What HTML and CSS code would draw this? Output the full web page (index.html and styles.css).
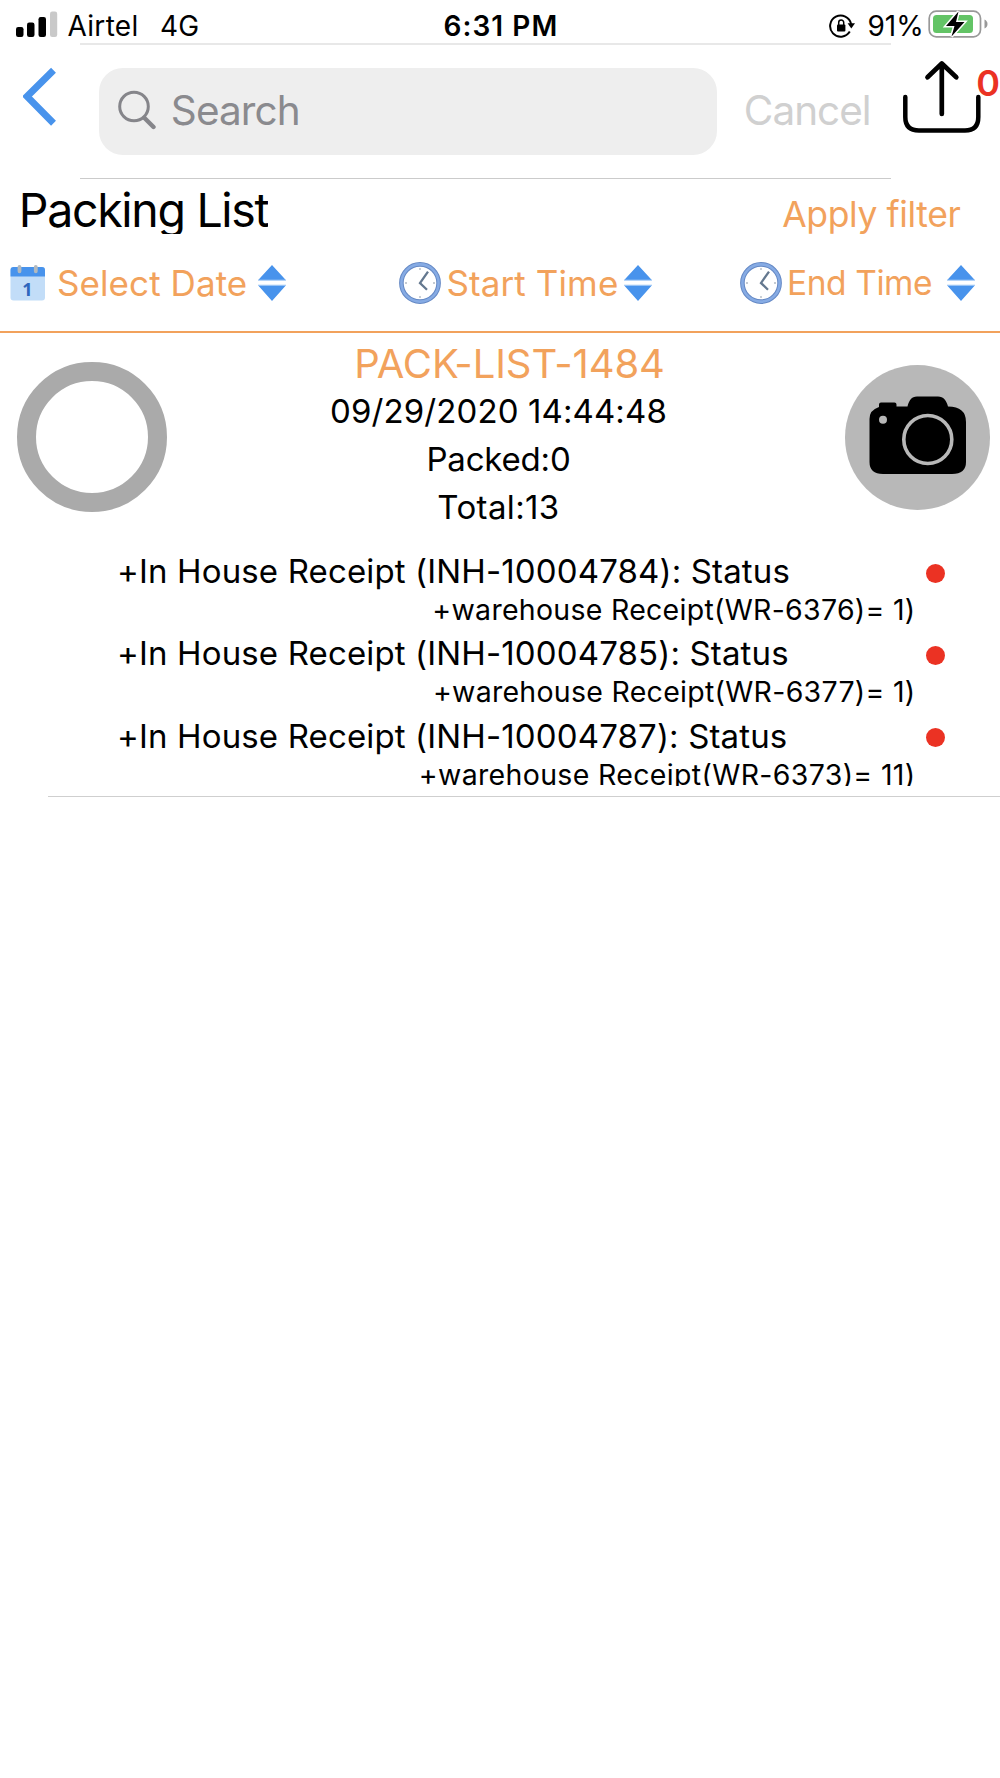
FILE: index.html
```html
<!DOCTYPE html>
<html lang="en">
<head>
<meta charset="utf-8">
<title>Packing List</title>
<link rel="stylesheet" href="styles.css">
</head>
<body>
<svg width="0" height="0" class="defs" aria-hidden="true">
  <symbol id="sort" viewBox="0 0 30 38">
    <path d="M15 1 29 16.2H1zM15 37 29 21.2H1z" fill="#4893ec"/>
    <path d="M1 16.2h28M1 21.2h28" stroke="#a9cdf6" stroke-width="1"/>
  </symbol>
  <symbol id="clock" viewBox="0 0 44 44">
    <circle cx="22" cy="22" r="18.6" fill="#fff" stroke="#6488c4" stroke-width="4.6"/>
    <circle cx="22" cy="22" r="18.6" fill="none" stroke="#86abe4" stroke-width="2.6"/>
    <path d="M22 7v2M22 35v2M7 22h2M35 22h2" stroke="#c5cbd2" stroke-width="1.8"/>
    <path d="M30 10.600 22 22l7 6.800" fill="none" stroke="#64788f" stroke-width="2.300"/>
  </symbol>
</svg>

<header class="status">
  <svg class="signal" width="42" height="27" viewBox="0 0 42 27">
    <rect x="0" y="16" width="7.500" height="10" rx="2.200"/>
    <rect x="11" y="11.500" width="7.500" height="14.500" rx="2.200"/>
    <rect x="22.500" y="6" width="7.500" height="20" rx="2.200"/>
    <rect x="34" y="0.500" width="7.200" height="25.500" rx="2.200" fill="#c9c9c9"/>
  </svg>
  <span class="carrier">Airtel</span>
  <span class="network">4G</span>
  <span class="clock-time">6:31 PM</span>
  <svg class="lock" width="28" height="26" viewBox="0 0 28 26">
    <path d="M20.800 18.600A10.600 10.600 0 1 1 22.100 11" fill="none" stroke="#000" stroke-width="2"/>
    <path d="M18.600 10.300H26L22.300 15.600z"/>
    <rect x="8" y="11.500" width="8.400" height="7" rx="1"/>
    <path d="M9.700 12V9.500a2.500 2.500 0 0 1 5 0V12" fill="none" stroke="#000" stroke-width="1.500"/>
  </svg>
  <span class="percent">91%</span>
  <svg class="battery" width="60" height="30" viewBox="0 0 60 30">
    <rect x="1.200" y="2.200" width="51.300" height="25.600" rx="7" fill="none" stroke="#999" stroke-width="1.700"/>
    <rect x="5" y="6" width="40" height="18" rx="3.500" fill="#63c466"/>
    <path d="M56.500 10.500q3 1.500 3 4.500t-3 4.500z" fill="#999"/>
    <path d="M30.500 2.500 18 17h8.500L23.500 27.500 36.500 13h-8.500z" fill="#000" stroke="#fff" stroke-width="3" paint-order="stroke"/>
  </svg>
</header>

<nav class="nav">
  <svg class="back" width="34" height="60" viewBox="0 0 34 60">
    <path d="M30.500 3.200 4 29.500 30.500 56.200" fill="none" stroke="#4893ec" stroke-width="6.900"/>
  </svg>
  <div class="search">
    <svg width="40" height="40" viewBox="0 0 40 40" fill="none" stroke="#85858a">
      <circle cx="16" cy="16.500" r="14.300" stroke-width="3"/>
      <path d="M26.500 28 35.500 37" stroke-width="4.400" stroke-linecap="round"/>
    </svg>
    <span>Search</span>
  </div>
  <span class="cancel">Cancel</span>
  <div class="upload">
    <svg width="80" height="74" viewBox="0 0 80 74" fill="none" stroke="#000" stroke-linecap="round">
      <path d="M3.300 37V57Q3.300 70.500 17 70.500H63Q76.300 70.500 76.300 57V37" stroke-width="4.500"/>
      <path d="M39.800 54V3.500M25.500 17.300 39.800 3.500 54.300 17.300" stroke-width="4.700" stroke-linejoin="round"/>
    </svg>
    <span class="count">0</span>
  </div>
</nav>

<main>
  <div class="heading">
    <h1>Packing List</h1>
    <span class="apply">Apply filter</span>
  </div>

  <div class="filters">
    <div class="filter date">
      <svg width="36" height="37" viewBox="0 0 36 37">
        <rect x="0.500" y="2" width="34.500" height="33.500" rx="3" fill="#c2ddf8"/>
        <path d="M0.500 11.500V5a3 3 0 0 1 3-3H32a3 3 0 0 1 3 3V11.500z" fill="#4893ec"/>
        <path d="M9.500 1.900v4.400M25.800 1.900v4.400" stroke="#b3b9bd" stroke-width="3.800" stroke-linecap="round"/>
        <text x="17.500" y="30.500" text-anchor="middle" class="day">1</text>
      </svg>
      <span>Select Date</span>
      <svg class="sort" width="30" height="38"><use href="#sort"/></svg>
    </div>
    <div class="filter start">
      <svg width="44" height="44"><use href="#clock"/></svg>
      <span>Start Time</span>
      <svg class="sort" width="30" height="38"><use href="#sort"/></svg>
    </div>
    <div class="filter end">
      <svg width="44" height="44"><use href="#clock"/></svg>
      <span>End Time</span>
      <svg class="sort" width="30" height="38"><use href="#sort"/></svg>
    </div>
  </div>

  <article class="pack">
    <div class="summary">
      <div class="ring"></div>
      <div class="info">
        <h2>PACK-LIST-1484</h2>
        <p class="when">09/29/2020 14:44:48</p>
        <p class="packed">Packed:0</p>
        <p class="total">Total:13</p>
      </div>
      <div class="camera">
        <svg width="98" height="80" viewBox="0 0 98 80">
          <path d="M0.500 23Q0.500 14 10 11V8.500Q10 6.500 12 6.500H25.500Q27.500 6.500 27.500 8.500V10.500H38.500C40 4.500 42.500 0.500 48 0.500H69C74.500 0.500 77.500 4.500 79 10.500Q97 10.500 97 26V66Q97 78 83 78H14Q0.500 78 0.500 66z"/>
          <circle cx="58.800" cy="43.500" r="24" fill="none" stroke="#b8b8b8" stroke-width="3.600"/>
          <circle cx="14" cy="23.700" r="4" fill="#b8b8b8"/>
        </svg>
      </div>
    </div>
    <ul class="receipts">
      <li>
        <div class="receipt"><span>+In House Receipt (INH-10004784): Status</span><i class="dot"></i></div>
        <div class="warehouse">+warehouse Receipt(WR-6376)= 1)</div>
      </li>
      <li>
        <div class="receipt"><span>+In House Receipt (INH-10004785): Status</span><i class="dot"></i></div>
        <div class="warehouse">+warehouse Receipt(WR-6377)= 1)</div>
      </li>
      <li>
        <div class="receipt"><span>+In House Receipt (INH-10004787): Status</span><i class="dot"></i></div>
        <div class="warehouse wide">+warehouse Receipt(WR-6373)= 11)</div>
      </li>
    </ul>
  </article>
</main>
</body>
</html>
```
FILE: styles.css
```css
* {
  box-sizing: border-box;
  margin: 0;
  padding: 0;
}

body {
  width: 1000px;
  min-height: 1778px;
  background: #fff;
  color: #000;
  font-family: Inter, "Liberation Sans", sans-serif;
  white-space: nowrap;
}

svg {
  display: block;
  flex: none;
}

.defs {
  position: absolute;
}

/* Status bar */
.status {
  display: flex;
  height: 43px;
  font-size: 28px;
  line-height: 52px;
}

.signal {
  margin: 11px 0 0 16px;
}

.carrier {
  width: 92.5px;
  margin-left: 9.5px;
  letter-spacing: 0.3px;
}

.network {
  width: 283.5px;
  letter-spacing: 0.2px;
}

.clock-time {
  width: 385px;
  font-weight: 600;
  letter-spacing: 1.05px;
}

.lock {
  margin: 13px 0 0 0.5px;
}

.percent {
  width: 58px;
  margin-left: 10.5px;
}

.battery {
  margin: 9px 0 0 2px;
}

/* Search header */
.nav {
  display: flex;
  height: 136px;
  background:
    linear-gradient(#e8e8e8, #e8e8e8) 80px 0 / 811px 2px no-repeat,
    linear-gradient(#cbcbcb, #cbcbcb) 80px 133px / 811px 1px no-repeat;
  background-position: 80px 0, 80px 135px;
}

.back {
  margin: 24px 0 0 23.3px;
}

.search {
  display: flex;
  width: 618px;
  height: 86.5px;
  margin: 25px 0 0 42px;
  padding-left: 19px;
  border-radius: 24px;
  background: #eee;
  color: #8a8a8e;
  font-size: 40.5px;
  line-height: 85px;
  letter-spacing: -0.9px;
}

.search svg {
  margin: 21.5px 12.5px 0 0;
}

.cancel {
  width: 156px;
  margin: 25px 0 0 27px;
  color: #d0d0d0;
  font-size: 40.5px;
  line-height: 85px;
  letter-spacing: -1px;
}

.upload {
  display: flex;
  margin-top: 17px;
  margin-left: 2px;
}

.count {
  margin-left: -5.5px;
  color: #eb3223;
  font-size: 36px;
  font-weight: 600;
  line-height: 46px;
}

/* Title and filters */
.heading {
  display: flex;
  justify-content: space-between;
  height: 55px;
  padding: 0 39.5px 0 18.8px;
}

h1 {
  overflow: hidden;
  font-size: 46.5px;
  font-weight: 400;
  line-height: 62px;
  letter-spacing: -1.33px;
}

.apply {
  color: #f2a25c;
  font-size: 35.5px;
  line-height: 72px;
  letter-spacing: -0.38px;
}

.filters {
  display: flex;
  height: 99px;
  padding-top: 26px;
  border-bottom: 2px solid #f2a25c;
  color: #f2a25c;
  font-size: 35px;
  line-height: 46px;
}

.filter {
  display: flex;
  align-items: center;
  height: 46px;
}

.date {
  width: 397.5px;
  padding-left: 9.5px;
}

.date span {
  width: 199.5px;
  margin-left: 11.5px;
  letter-spacing: 0.08px;
}

.day {
  fill: #2f66bd;
  font: 700 18px "Open Sans", sans-serif;
}

.start {
  width: 341.5px;
}

.start span {
  width: 176px;
  margin-left: 5px;
  letter-spacing: 0.1px;
}

.end span {
  width: 159px;
  margin-left: 4px;
  font-size: 33.5px;
  letter-spacing: -0.42px;
}

/* Packing list entry */
.pack {
  height: 464px;
  margin-left: 48px;
  border-bottom: 1px solid #cfcfcf;
}

.summary {
  display: flex;
  justify-content: space-between;
  height: 205px;
  margin-left: -48px;
  padding: 0 9.5px 0 17px;
}

.ring {
  width: 150px;
  height: 150px;
  margin-top: 29px;
  border: 19px solid #aaa;
  border-radius: 50%;
}

.info {
  padding: 6.5px 15px 0 0;
  font-size: 33px;
  line-height: 48.3px;
  text-align: center;
}

h2 {
  padding-left: 22px;
  color: #f2a25c;
  font-size: 40px;
  font-weight: 400;
  line-height: 47px;
  letter-spacing: -0.09px;
}

.when {
  letter-spacing: 0.1px;
}

.packed {
  letter-spacing: -0.18px;
}

.total {
  letter-spacing: 0.37px;
}

.camera {
  display: flex;
  width: 145.5px;
  height: 145.5px;
  margin-top: 31.5px;
  padding: 31.500px 0 0 24.5px;
  border-radius: 50%;
  background: #b8b8b8;
}

.receipts {
  height: 248px;
  padding: 13.3px 55px 0 69px;
  overflow: hidden;
  list-style: none;
}

.receipts li {
  height: 82.2px;
}

.receipt {
  display: flex;
  align-items: center;
  justify-content: space-between;
  height: 41px;
  font-size: 33px;
  line-height: 41px;
  letter-spacing: 0.14px;
}

.dot {
  width: 19.5px;
  height: 19.5px;
  margin-top: 3px;
  border-radius: 50%;
  background: #eb3223;
}

.warehouse {
  padding-right: 29.5px;
  font-size: 28.5px;
  line-height: 36px;
  letter-spacing: 0.28px;
  text-align: right;
}

.wide {
  letter-spacing: 0.335px;
}
```
